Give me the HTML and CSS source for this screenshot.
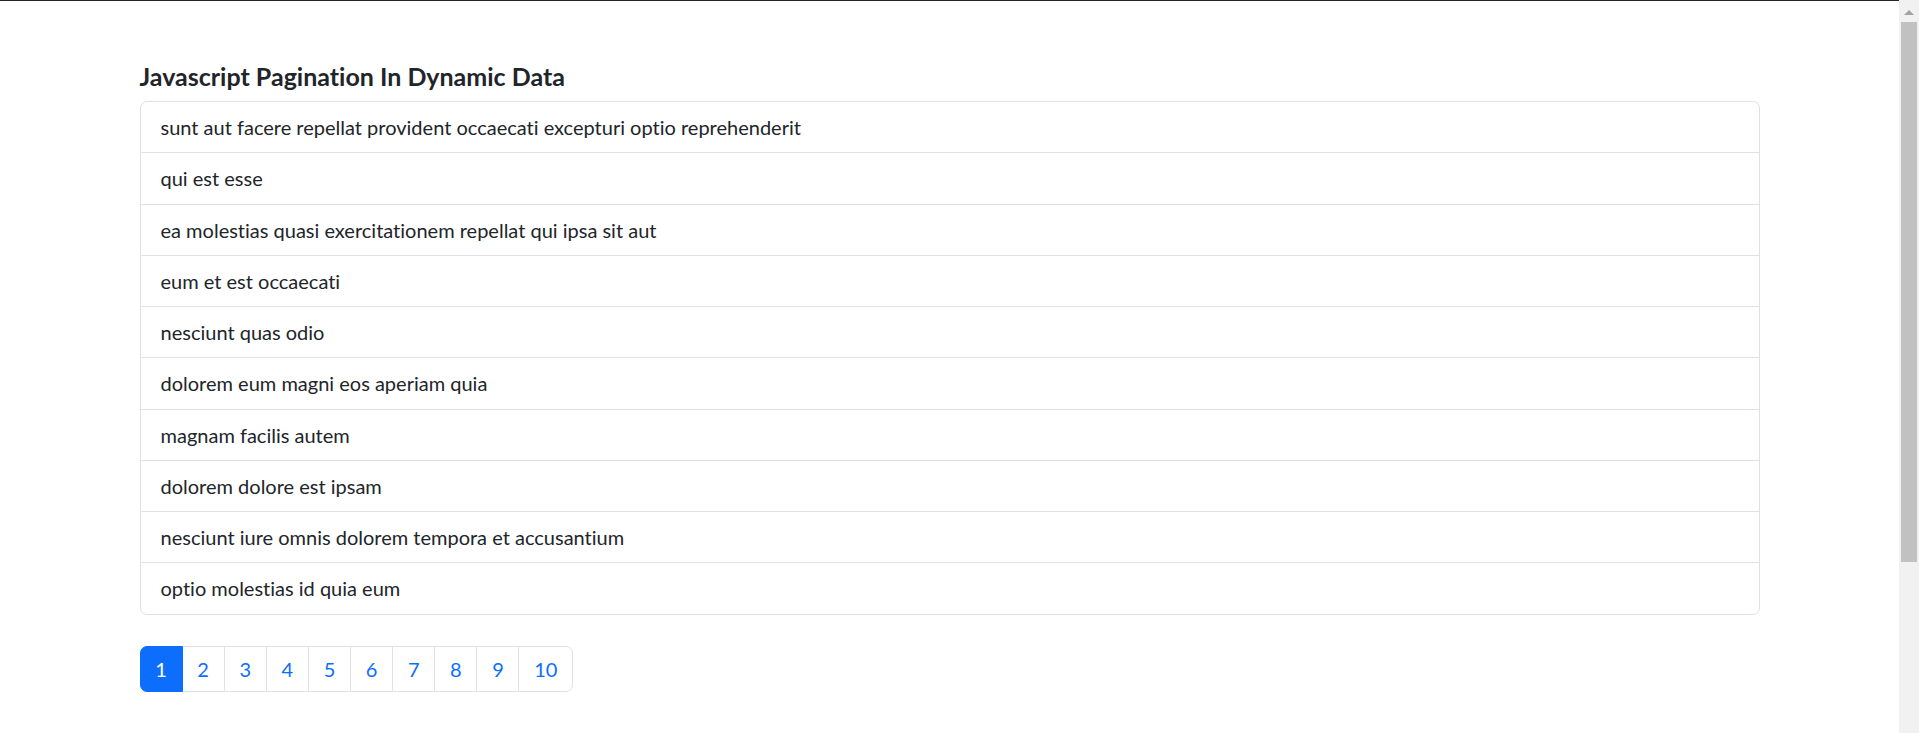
FILE: index.html
```html
<!DOCTYPE html>
<html lang="en">
<head>
<meta charset="utf-8">
<title>Javascript Pagination In Dynamic Data</title>
<link rel="stylesheet" href="styles.css">
</head>
<body>
<div class="page">
  <div class="container">
    <h5 class="title">Javascript Pagination In Dynamic Data</h5>
    <ul class="list-group">
      <li class="list-item">sunt aut facere repellat provident occaecati excepturi optio reprehenderit</li>
      <li class="list-item">qui est esse</li>
      <li class="list-item">ea molestias quasi exercitationem repellat qui ipsa sit aut</li>
      <li class="list-item">eum et est occaecati</li>
      <li class="list-item">nesciunt quas odio</li>
      <li class="list-item">dolorem eum magni eos aperiam quia</li>
      <li class="list-item">magnam facilis autem</li>
      <li class="list-item">dolorem dolore est ipsam</li>
      <li class="list-item">nesciunt iure omnis dolorem tempora et accusantium</li>
      <li class="list-item">optio molestias id quia eum</li>
    </ul>
    <ul class="pagination">
      <li class="page-item active"><a class="page-link" href="#">1</a></li>
      <li class="page-item"><a class="page-link" href="#">2</a></li>
      <li class="page-item"><a class="page-link" href="#">3</a></li>
      <li class="page-item"><a class="page-link" href="#">4</a></li>
      <li class="page-item"><a class="page-link" href="#">5</a></li>
      <li class="page-item"><a class="page-link" href="#">6</a></li>
      <li class="page-item"><a class="page-link" href="#">7</a></li>
      <li class="page-item"><a class="page-link" href="#">8</a></li>
      <li class="page-item"><a class="page-link" href="#">9</a></li>
      <li class="page-item"><a class="page-link" href="#">10</a></li>
    </ul>
  </div>
</div>
<div class="scrollbar">
  <div class="scroll-arrow"></div>
  <div class="scroll-thumb"></div>
</div>
</body>
</html>
```

FILE: styles.css
```css
html, body {
  margin: 0;
  padding: 0;
  height: 100%;
  overflow: hidden;
  background: #fff;
}

body {
  font-family: "Lato", "Liberation Sans", sans-serif;
  font-size: 20px;
  line-height: 30px;
  color: #212529;
  font-variant-ligatures: none;
}

.page {
  margin-right: 20px;
  border-top: 1px solid #212529;
  padding-top: 60px;
  height: 100%;
  box-sizing: border-box;
}

.container {
  max-width: 1650px;
  margin: 0 auto;
  padding: 0 15px;
  box-sizing: border-box;
}

.title {
  margin: 0 0 10px;
  font-size: 25px;
  line-height: 30px;
  font-weight: 700;
  color: #212529;
}

.list-group {
  list-style: none;
  margin: 0;
  padding: 0;
  border: 1px solid #dee2e6;
  border-radius: 7px;
}

.list-item {
  padding: 10px 20px;
  line-height: 30.25px;
  border-top: 1px solid #dee2e6;
}

.list-item:first-child {
  border-top: none;
}

.pagination {
  display: flex;
  list-style: none;
  margin: 31px 0 0;
  padding: 0;
}

.page-item + .page-item {
  margin-left: -1px;
}

.page-link {
  display: block;
  padding: 7px 14.75px;
  line-height: 30px;
  color: #0d6efd;
  text-decoration: none;
  background: #fff;
  border: 1px solid #dee2e6;
}

.page-item:first-child .page-link {
  border-radius: 7px 0 0 7px;
}

.page-item:last-child .page-link {
  border-radius: 0 7px 7px 0;
}

.page-item.active .page-link {
  background: #0d6efd;
  border-color: #0d6efd;
  color: #fff;
  position: relative;
  z-index: 1;
}

.scrollbar {
  position: fixed;
  top: 0;
  right: 0;
  width: 20px;
  height: 100%;
  background: #f1f1f1;
}

.scroll-arrow {
  position: absolute;
  top: 10px;
  left: 5px;
  width: 0;
  height: 0;
  border-left: 5px solid transparent;
  border-right: 5px solid transparent;
  border-bottom: 5px solid #a3a3a3;
}

.scroll-thumb {
  position: absolute;
  top: 22px;
  left: 2px;
  width: 16px;
  height: 540px;
  background: #c1c1c1;
}
```
